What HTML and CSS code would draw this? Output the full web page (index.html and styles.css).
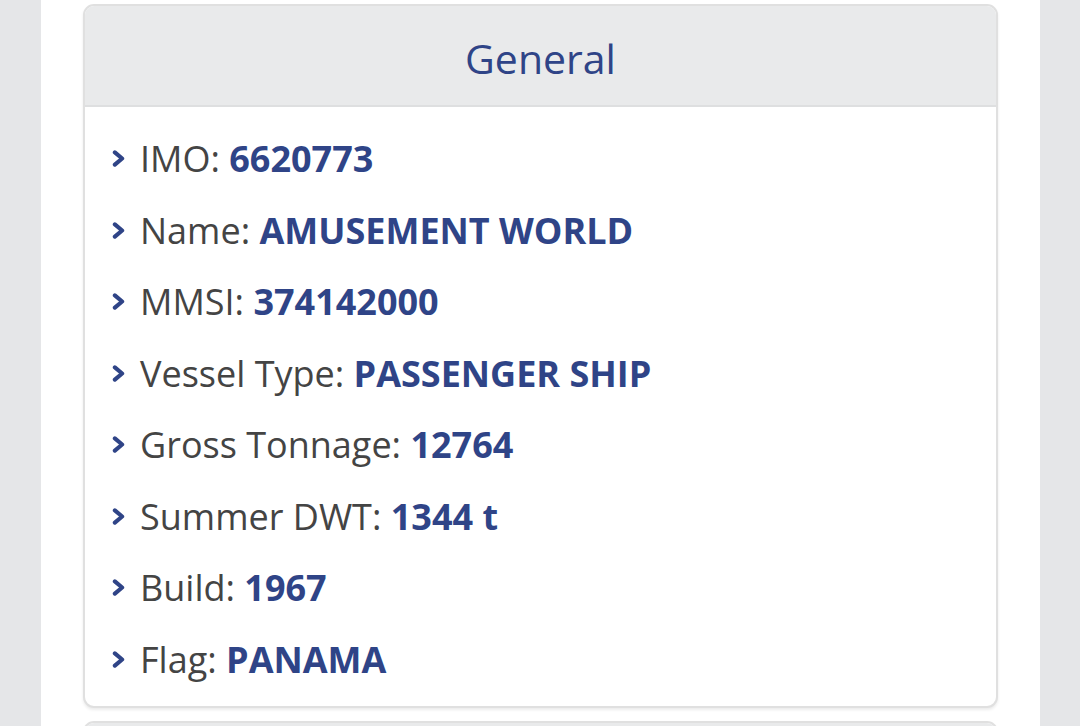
FILE: index.html
```html
<!DOCTYPE html>
<html>
<head>
<meta charset="utf-8">
<link rel="stylesheet" href="styles.css">
</head>
<body>
<div class="page">
  <section class="card">
    <h2 class="card-head">General</h2>
    <ul class="facts">
      <li><svg class="chev" viewBox="0 0 12 14"><polyline points="3,2 9,7 3,12"/></svg><span class="lbl">IMO: </span><b>6620773</b></li>
      <li><svg class="chev" viewBox="0 0 12 14"><polyline points="3,2 9,7 3,12"/></svg><span class="lbl">Name: </span><b>AMUSEMENT WORLD</b></li>
      <li><svg class="chev" viewBox="0 0 12 14"><polyline points="3,2 9,7 3,12"/></svg><span class="lbl">MMSI: </span><b>374142000</b></li>
      <li><svg class="chev" viewBox="0 0 12 14"><polyline points="3,2 9,7 3,12"/></svg><span class="lbl">Vessel Type: </span><b>PASSENGER SHIP</b></li>
      <li><svg class="chev" viewBox="0 0 12 14"><polyline points="3,2 9,7 3,12"/></svg><span class="lbl">Gross Tonnage: </span><b>12764</b></li>
      <li><svg class="chev" viewBox="0 0 12 14"><polyline points="3,2 9,7 3,12"/></svg><span class="lbl">Summer DWT: </span><b>1344 t</b></li>
      <li><svg class="chev" viewBox="0 0 12 14"><polyline points="3,2 9,7 3,12"/></svg><span class="lbl">Build: </span><b>1967</b></li>
      <li><svg class="chev" viewBox="0 0 12 14"><polyline points="3,2 9,7 3,12"/></svg><span class="lbl">Flag: </span><b>PANAMA</b></li>
    </ul>
  </section>
  <section class="card next">
    <div class="card-head small"></div>
  </section>
</div>
</body>
</html>
```

FILE: styles.css
```css
html, body {
  margin: 0;
  padding: 0;
  background: #e5e6e8;
  height: 726px;
  overflow: hidden;
}
body {
  font-family: "Open Sans", "Noto Sans", sans-serif;
}
.page {
  width: 915px;
  margin-left: 41px;
  background: #ffffff;
  padding: 4px 42px 0 42px;
  height: 722px;
  overflow: hidden;
}
.card {
  border: 2px solid #e0e0e0;
  border-radius: 11px;
  background: #ffffff;
  box-shadow: 0 2px 3px rgba(0,0,0,0.08);
  overflow: hidden;
}
.card-head {
  margin: 0;
  background: #e9eaeb;
  border-bottom: 2px solid #dedfe0;
  height: 99px;
  line-height: 104px;
  text-align: center;
  font-weight: 400;
  font-size: 41px;
  color: #2f4487;
}
.facts {
  list-style: none;
  margin: 0;
  padding: 16px 0 11px 26px;
}
.facts li {
  height: 71.5px;
  line-height: 71.5px;
  font-size: 36px;
  color: #444444;
  white-space: pre;
}
.chev {
  display: inline-block;
  width: 15px;
  height: 17px;
  margin-right: 14px;
  vertical-align: 5px;
  fill: none;
  stroke: #2f4487;
  stroke-width: 3.4;
  stroke-linecap: round;
  stroke-linejoin: round;
}
.facts b {
  color: #2f4487;
  font-weight: 700;
}
.next {
  margin-top: 13px;
}
.card-head.small {
  height: 40px;
}
```
